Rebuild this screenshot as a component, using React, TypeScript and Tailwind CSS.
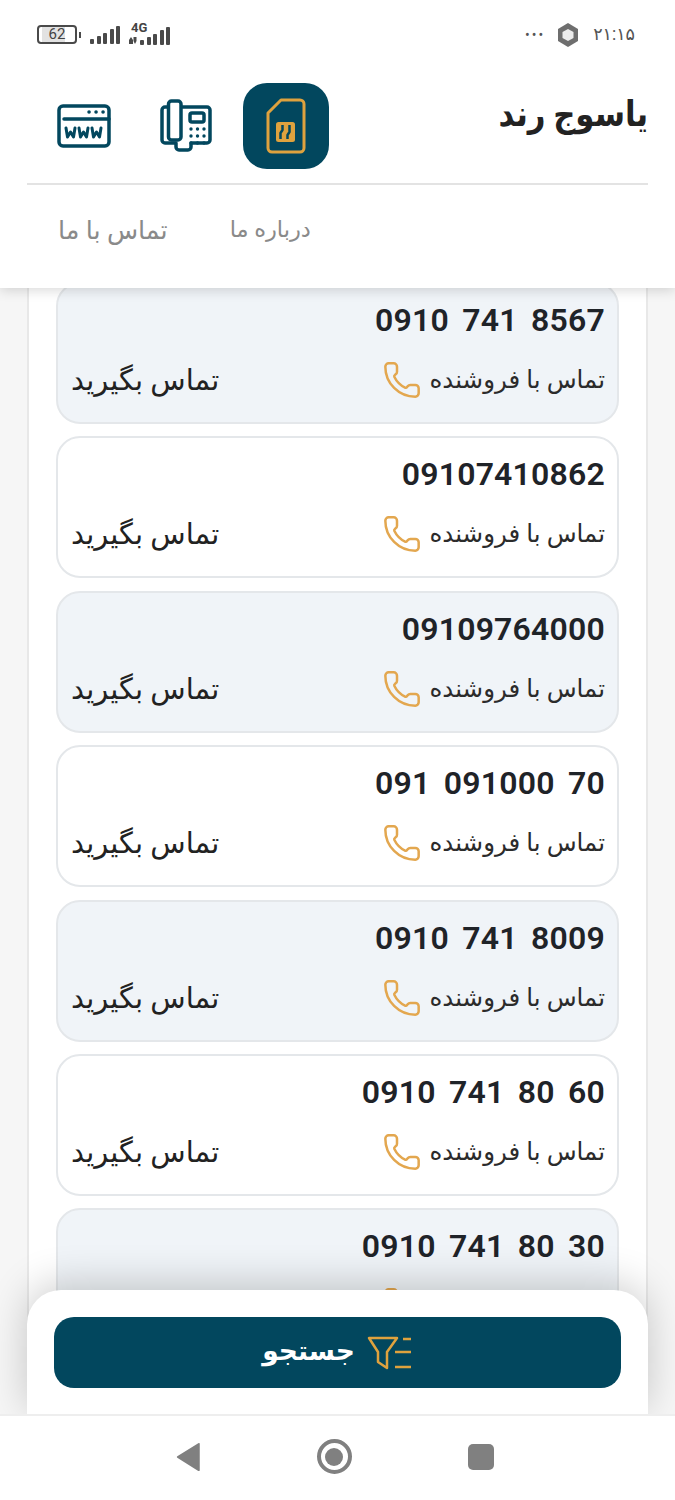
import React from 'react'
import { Phone } from 'lucide-react'

const numbers = [
  '0910  741  8567',
  '09107410862',
  '09109764000',
  '091  091000  70',
  '0910  741  8009',
  '0910  741  80  60',
  '0910  741  80  30',
]

const fontStack = { fontFamily: 'Roboto, "DejaVu Sans", sans-serif' }

function Bars() {
  const heights = [5, 8, 11, 15, 18]
  return (
    <div className="flex items-end gap-[2.500px]">
      {heights.map((h, i) => (
        <div key={i} className="w-[4px] rounded-[1px] bg-[#4a4a4a]" style={{ height: h }} />
      ))}
    </div>
  )
}

function StatusBar() {
  return (
    <div dir="ltr" className="flex h-[70px] items-center justify-between pb-[1px] pl-[37px] pr-[40px]">
      <div className="flex items-center">
        <div className="flex items-center gap-[2px]">
          <div className="flex h-[19px] w-[40px] items-center justify-center rounded-[4px] border-2 border-[#4a4a4a] bg-[linear-gradient(90deg,#fff_0%,#fff_8%,#e2e2e2_8%,#e2e2e2_72%,#fff_72%)] text-[15px] leading-none text-[#444]">
            62
          </div>
          <div className="h-[6px] w-[2px] bg-[#4a4a4a]" />
        </div>
        <div className="ml-[9px] flex"><Bars /></div>
        <div className="relative ml-[9px] flex h-[20px] items-end gap-[3px]">
          <span className="absolute -top-[4px] left-[2px] text-[13px] font-bold leading-none text-[#444]">4G</span>
          <svg className="mb-[1px]" width="8" height="7" viewBox="0 0 8 7" fill="#4a4a4a">
            <path d="M0 3 2 0l2 3v4H0zM4.500 0h3v4L6 7 4.500 4z" />
          </svg>
          <Bars />
        </div>
      </div>
      <div className="flex items-center">
        <span className="text-[14px] leading-none tracking-[2px] text-[#555]">•••</span>
        <svg className="ml-[12px]" width="22" height="24" viewBox="0 0 22 24">
          <path d="M11 0 21 6v12l-10 6-10-6V6z" fill="#6e6e6e" />
          <path d="M11 6l5.500 3v6L11 18l-5.500-3V9z" fill="#ececec" />
        </svg>
        <span className="ml-[14px] text-[17.500px] leading-none tracking-[-0.400px] text-[#555]">۲۱:۱۵</span>
      </div>
    </div>
  )
}

function SimIcon() {
  return (
    <svg width="40" height="56" viewBox="0 0 40 56" fill="none" stroke="#dfa23e" strokeWidth="3" strokeLinejoin="round">
      <path d="M15 2h19a4 4 0 0 1 4 4v44a4 4 0 0 1-4 4H6a4 4 0 0 1-4-4V15z" />
      <rect x="10" y="24" width="19" height="20" rx="2.500" fill="#dfa23e" stroke="none" />
      <path d="M16.500 27v5l-2 3v6M23.500 27v7l-2 3v4" stroke="#02475e" strokeWidth="2.500" />
    </svg>
  )
}

function DeskPhoneIcon() {
  return (
    <svg width="52" height="54" viewBox="0 0 52 54" fill="none" stroke="#02475e" strokeWidth="3.500" strokeLinejoin="round" strokeLinecap="round">
      <rect x="8.500" y="2" width="12.500" height="39" rx="3" />
      <path d="M8 8H5a3 3 0 0 0-3 3v30a3 3 0 0 0 3 3h11v4a3 3 0 0 0 3 3h9a3 3 0 0 0 3-3v-4h16a3 3 0 0 0 3-3V11a3 3 0 0 0-3-3H22" />
      <rect x="30" y="14" width="14" height="9" rx="2" />
      <g fill="#02475e" stroke="none">
        {[30, 37, 44].flatMap(y =>
          [31, 37.5, 44].map(x => <circle key={`${x}-${y}`} cx={x} cy={y} r="1.700" />),
        )}
      </g>
    </svg>
  )
}

function WebIcon() {
  return (
    <svg width="54" height="44" viewBox="0 0 54 44" fill="none" stroke="#02475e" strokeWidth="3.500" strokeLinecap="round" strokeLinejoin="round">
      <rect x="2" y="2" width="50" height="40" rx="4" />
      <path d="M7 15h45" />
      <path d="M32 8h.1M39 8h.1M46 8h.1" />
      <path d="M9 24l1.500 9 3-5 3 5 1.500-9M22 24l1.500 9 3-5 3 5 1.500-9M35 24l1.500 9 3-5 3 5 1.500-9" strokeWidth="3" />
    </svg>
  )
}

function Header() {
  return (
    <header className="relative z-10 h-[288px] shrink-0 bg-white shadow-[0_2px_12px_rgba(0,0,0,0.16)]">
      <StatusBar />
      <div className="mx-[27px] flex h-[115px] items-center justify-between border-b-2 border-[#e3e3e3] pb-[2px]">
        <h1 className="origin-right scale-x-[0.88] whitespace-nowrap pb-[22px] text-[35px] font-bold leading-none text-[#222]">یاسوج رند</h1>
        <div className="ml-[30px] flex items-center">
          <div className="flex h-[86px] w-[86px] items-center justify-center rounded-[24px] bg-[#02475e]">
            <SimIcon />
          </div>
          <div className="mr-[31px] flex"><DeskPhoneIcon /></div>
          <div className="mr-[49px] flex"><WebIcon /></div>
        </div>
      </div>
      <nav className="flex h-[92px] items-center justify-end gap-[62px] pb-[2px] pl-[58px] text-[#8a8a8a]">
        <a className="text-[22.500px]">درباره ما</a>
        <a className="text-[25.500px]">تماس با ما</a>
      </nav>
    </header>
  )
}

function NumberCard({ number, shaded }: { number: string; shaded: boolean }) {
  return (
    <div className={`flex h-[142px] shrink-0 flex-col rounded-[24px] border-2 border-[#e4e7ea] pl-[13px] pr-[12px] ${shaded ? 'bg-[#f0f4f8]' : 'bg-white'}`}>
      <div dir="ltr" className="mt-[17px] whitespace-pre text-right text-[32px] font-semibold leading-[38px] tracking-[0.2px] text-[#1f2328] [word-spacing:-1.500px]">
        {number}
      </div>
      <div className="mt-[21px] flex items-center justify-between">
        <div className="flex items-center gap-[8px]">
          <span className="text-[24.500px] leading-[38px] text-[#2b2b2b]">تماس با فروشنده</span>
          <Phone size={40} strokeWidth={1.5} color="#e3a74f" />
        </div>
        <span className="text-[29px] leading-[38px] text-[#222]">تماس بگیرید</span>
      </div>
    </div>
  )
}

function SearchIcon() {
  return (
    <svg width="46" height="34" viewBox="0 0 46 34" fill="none" stroke="#dfa23e" strokeWidth="2.500" strokeLinejoin="round">
      <path d="M2 2h28l-10 14v16l-9-6V16z" />
      <path d="M36 3h8M28 16h16M28 31h16" />
    </svg>
  )
}

function BottomBar() {
  return (
    <div className="absolute bottom-[85px] left-[27px] right-[27px] z-20 h-[125px] rounded-t-[34px] bg-white px-[27px] pt-[27px] shadow-[0_-6px_40px_rgba(0,0,0,0.2)]">
      <button className="flex h-[71px] w-full items-center justify-center gap-[12px] rounded-[20px] bg-[#02475e] text-white">
        <SearchIcon />
        <span className="pb-[4px] text-[26.500px] font-bold">جستجو</span>
      </button>
    </div>
  )
}

function NavBar() {
  return (
    <div dir="ltr" className="relative z-30 flex h-[86px] shrink-0 items-center justify-center border-t-2 border-[#eeeeee] bg-white pb-[3px] pr-[6px]">
      <svg className="mr-[116px]" width="25" height="30" viewBox="0 0 26 32">
        <path d="M25 2v28a1 1 0 0 1-1.600.800L1 16.800a1 1 0 0 1 0-1.600L23.400 1.200A1 1 0 0 1 25 2z" fill="#808080" />
      </svg>
      <div className="flex h-[35px] w-[35px] items-center justify-center rounded-full border-[4px] border-[#808080]">
        <div className="h-[18px] w-[18px] rounded-full bg-[#808080]" />
      </div>
      <div className="ml-[116px] h-[26px] w-[26px] rounded-[5px] bg-[#808080]" />
    </div>
  )
}

export default function App() {
  return (
    <div dir="rtl" style={fontStack} className="relative flex h-[1500px] w-[675px] flex-col overflow-hidden bg-[#f6f6f6]">
      <Header />
      <main className="mx-[27px] min-h-0 flex-1 overflow-hidden border-x-2 border-[#e8e8e8] bg-white">
        <div className="-mt-[6px] flex flex-col gap-[12.400px] px-[27px]">
          {numbers.map((number, i) => (
            <NumberCard key={i} number={number} shaded={i % 2 === 0} />
          ))}
        </div>
      </main>
      <BottomBar />
      <NavBar />
    </div>
  )
}
